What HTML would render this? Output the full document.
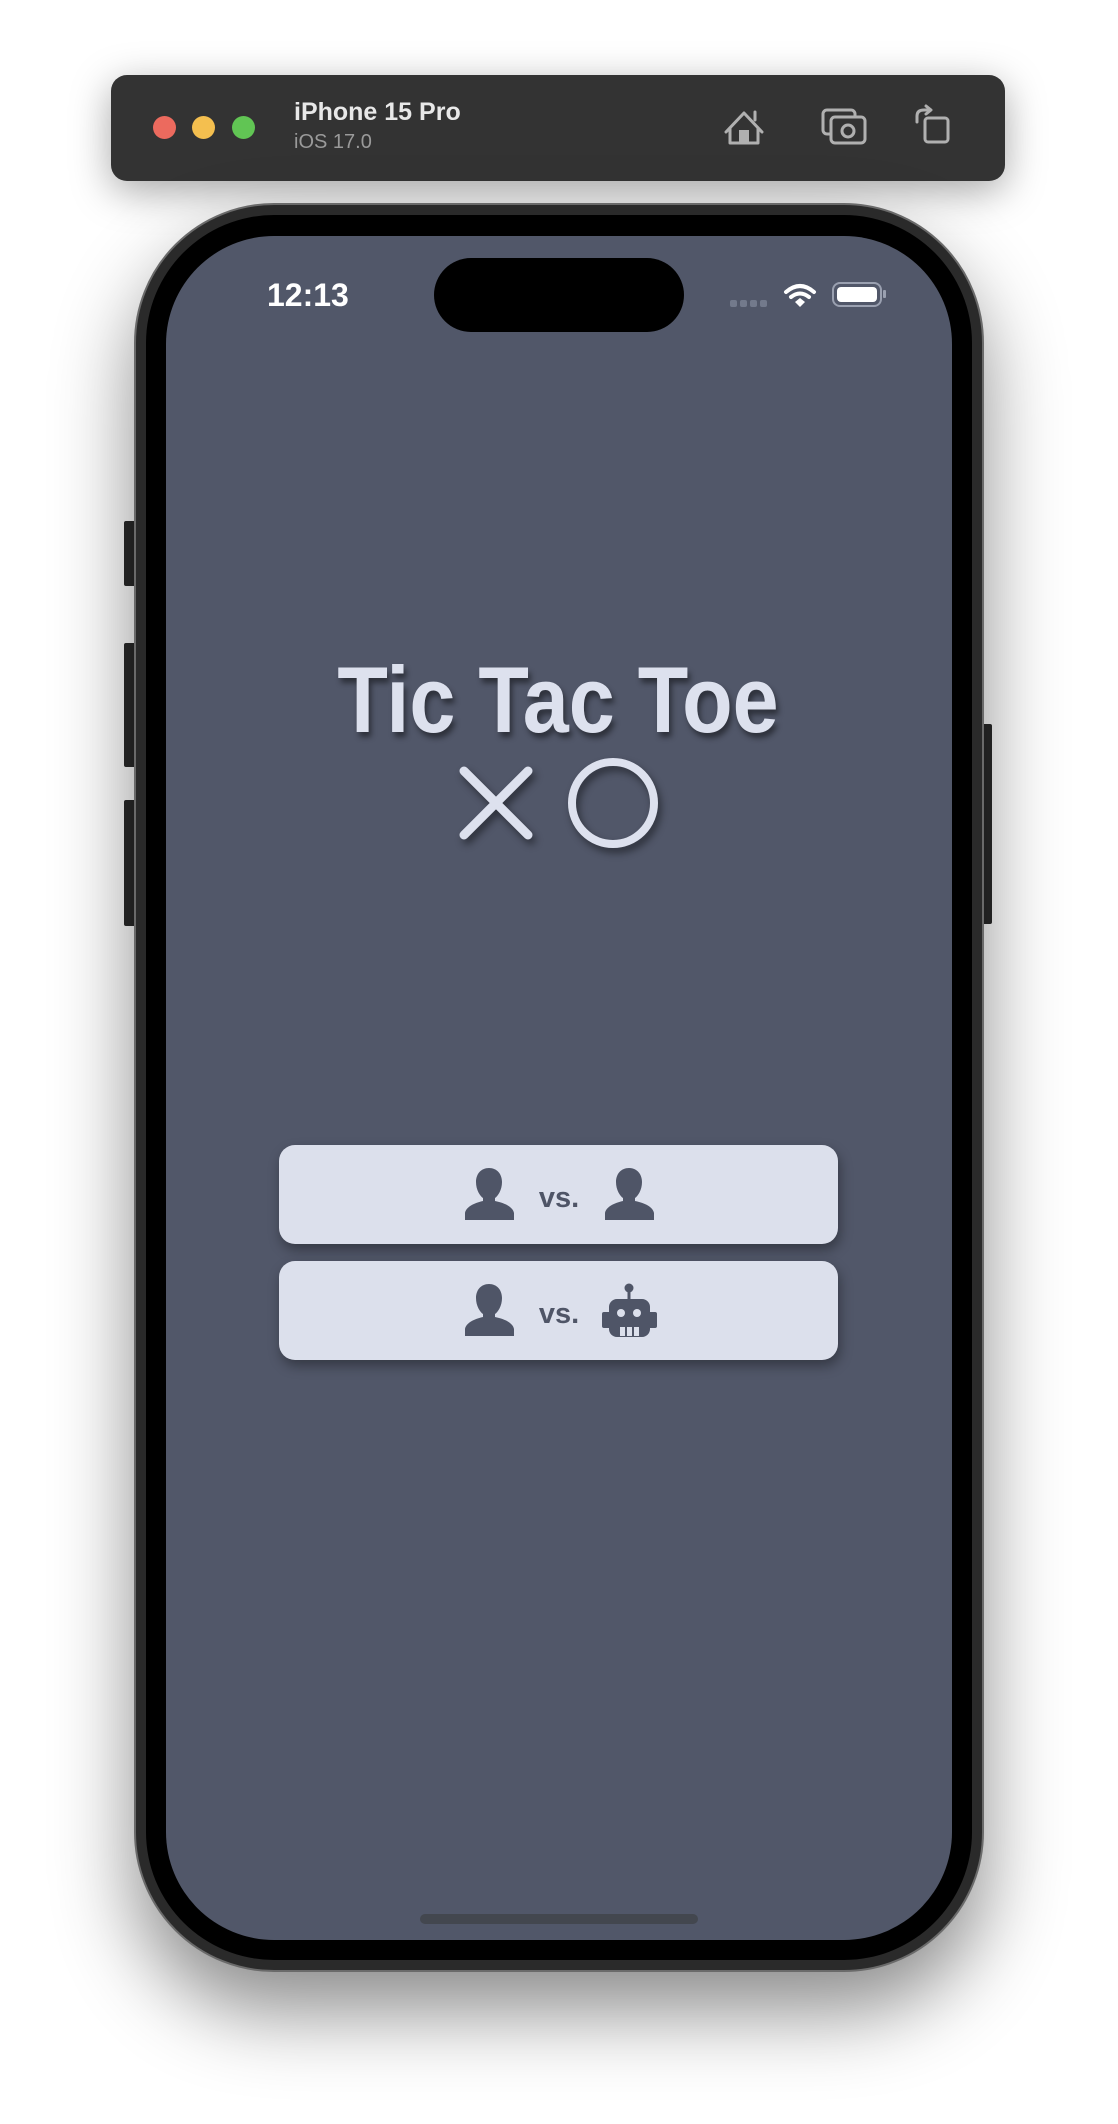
<!DOCTYPE html>
<html><head><meta charset="utf-8"><style>
*{margin:0;padding:0;box-sizing:border-box}
body{width:1118px;height:2124px;background:#fff;position:relative;overflow:hidden;font-family:"Liberation Sans",sans-serif}
.abs{position:absolute}
.toolbar{left:111px;top:75px;width:894px;height:106px;background:#333333;border-radius:16px;box-shadow:0 10px 40px rgba(0,0,0,.35)}
.dot{width:23px;height:23px;border-radius:50%;top:116px}
.phone{left:134px;top:203px;width:850px;height:1769px;border-radius:140px;background:#2a2a2a;border:2px solid #6a6a6a;box-shadow:0 40px 80px rgba(0,0,0,.45)}
.bezel{left:146px;top:215px;width:826px;height:1745px;border-radius:128px;background:#000}
.screen{left:166px;top:236px;width:786px;height:1704px;border-radius:108px;background:#515769;overflow:hidden}
.btn{left:279px;width:559px;height:99px;background:#dce0ec;border-radius:16px;box-shadow:2px 6px 12px rgba(0,0,0,.35)}
.side{background:#2a2a2a;border-radius:2px}
</style></head><body>
<div class="abs toolbar"></div>
<div class="abs dot" style="left:153px;background:#ec6a5e"></div>
<div class="abs dot" style="left:192px;background:#f4bf4f"></div>
<div class="abs dot" style="left:232px;background:#61c554"></div>
<div class="abs" style="left:294px;top:98px;color:#e8e8e8;font-weight:bold;font-size:25px">iPhone 15 Pro</div>
<div class="abs" style="left:294px;top:131px;color:#9a9a9a;font-size:20px">iOS 17.0</div>
<svg class="abs" style="left:720px;top:104px" width="240" height="44" viewBox="720 104 240 44" fill="none" stroke="#b0b0b0" stroke-width="3" stroke-linejoin="round" stroke-linecap="round">
<path d="M726 132 L744 113 L762 132 M730 128 V143 H758 V128 M755 120 V112"/>
<rect x="739" y="130" width="10" height="13" fill="#b0b0b0" stroke="none"/>
<rect x="823" y="110" width="32" height="24" rx="4"/>
<rect x="831" y="117" width="34" height="26" rx="4" fill="#333"/>
<circle cx="848" cy="131" r="6"/>
<rect x="925" y="118" width="23" height="24" rx="3"/>
<path d="M917 122 V116 Q917 110 924 110 H930 M926 106 L931 110 L926 114"/>
</svg>
<div class="abs side" style="left:124px;top:521px;width:12px;height:65px"></div>
<div class="abs side" style="left:124px;top:643px;width:12px;height:124px"></div>
<div class="abs side" style="left:124px;top:800px;width:12px;height:126px"></div>
<div class="abs side" style="left:982px;top:724px;width:10px;height:200px"></div>
<div class="abs phone"></div>
<div class="abs bezel"></div>
<div class="abs screen"></div>
<div class="abs" style="left:434px;top:258px;width:250px;height:74px;border-radius:37px;background:#000"></div>
<div class="abs" style="left:267px;top:277px;color:#fff;font-size:32px;font-weight:bold">12:13</div>
<svg class="abs" style="left:725px;top:278px" width="170" height="34" viewBox="725 278 170 34">
<g fill="#737a8c"><rect x="730" y="300" width="7" height="7" rx="2"/><rect x="740" y="300" width="7" height="7" rx="2"/><rect x="750" y="300" width="7" height="7" rx="2"/><rect x="760" y="300" width="7" height="7" rx="2"/></g>
<g fill="none" stroke="#fff" stroke-width="4" stroke-linecap="round"><path d="M786 292 Q800 280 814 292"/><path d="M791 297 Q800 290 809 297"/></g>
<path d="M795 302 L800 298 L805 302 L800 307Z" fill="#fff"/>
<rect x="833" y="283" width="48" height="23" rx="7" fill="none" stroke="#9aa0b0" stroke-width="2"/>
<rect x="837" y="287" width="40" height="15" rx="4" fill="#fff"/>
<rect x="883" y="290" width="3" height="8" rx="1" fill="#9aa0b0"/>
</svg>
<div class="abs" style="left:230px;top:650px;width:656px;text-align:center;font-size:94px;font-weight:bold;color:#dde1ee;transform:scaleX(0.88);letter-spacing:0;text-shadow:3px 5px 6px rgba(0,0,0,.45);line-height:100px">Tic Tac Toe</div>
<svg class="abs" style="left:440px;top:740px;filter:drop-shadow(3px 5px 4px rgba(0,0,0,.45))" width="240" height="130" viewBox="440 740 240 130" fill="none" stroke="#dde1ee" stroke-linecap="round">
<path d="M464 771 L528 835 M528 771 L464 835" stroke-width="9"/>
<circle cx="613" cy="803" r="41" stroke-width="8"/>
</svg>
<div class="abs btn" style="top:1145px"></div>
<div class="abs btn" style="top:1261px"></div>
<svg class="abs" style="left:279px;top:1145px" width="559" height="215" viewBox="279 1145 559 215" fill="#4f5567">
<defs><path id="p" d="M12 0 C20 0 25 6 25 14 C25 22 21 28 18 30 L18 33 C28 35 36 39 37 45 L37 52 L-12 52 L-12 45 C-11 39 -3 35 6 33 L6 30 C3 28 -1 22 -1 14 C-1 6 4 0 12 0Z"/></defs>
<use href="#p" x="477" y="1168"/>
<use href="#p" x="617" y="1168"/>
<use href="#p" x="477" y="1284"/>
<circle cx="629" cy="1288" r="4.5"/><rect x="627.5" y="1290" width="3" height="10"/>
<rect x="609" y="1299" width="41" height="38" rx="8"/>
<rect x="602" y="1312" width="55" height="16" rx="2"/>
<circle cx="621" cy="1313" r="4" fill="#dce0ec"/><circle cx="637" cy="1313" r="4" fill="#dce0ec"/>
<rect x="620" y="1327" width="5" height="9" fill="#dce0ec"/><rect x="627" y="1327" width="5" height="9" fill="#dce0ec"/><rect x="634" y="1327" width="5" height="9" fill="#dce0ec"/>
<text x="559" y="1207" font-family="Liberation Sans" font-weight="bold" font-size="29" text-anchor="middle">vs.</text>
<text x="559" y="1323" font-family="Liberation Sans" font-weight="bold" font-size="29" text-anchor="middle">vs.</text>
</svg>
<div class="abs" style="left:420px;top:1914px;width:278px;height:10px;border-radius:5px;background:#43474f"></div>
</body></html>
